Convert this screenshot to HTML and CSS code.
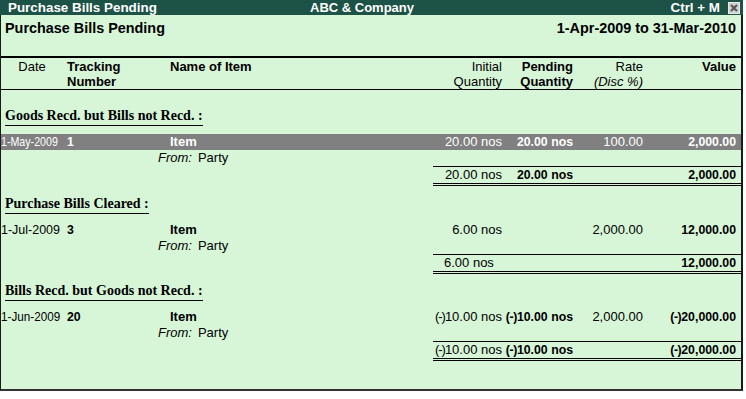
FILE: index.html
```html
<!DOCTYPE html>
<html>
<head>
<meta charset="utf-8">
<title>Purchase Bills Pending</title>
<link rel="stylesheet" href="styles.css">
</head>
<body>
<div class="app">
  <div class="titlebar">
    <span class="tb-left">Purchase Bills Pending</span>
    <span class="tb-center">ABC &amp; Company</span>
    <span class="tb-key">Ctrl + M</span>
    <span class="tb-close"><svg width="12" height="12" viewBox="0 0 12 12"><rect x="0.5" y="0.5" width="11" height="11" fill="#d0d0d0" stroke="#e8e8e8"/><path d="M3 3 L9 9 M9 3 L3 9" stroke="#555" stroke-width="2"/></svg></span>
  </div>
  <div class="body">
    <div class="report-head">
      <span class="rh-title">Purchase Bills Pending</span>
      <span class="rh-period">1-Apr-2009 to 31-Mar-2010</span>
    </div>
    <div class="cols grid">
      <div class="c-date center">Date</div>
      <div class="c-track b">Tracking<br>Number</div>
      <div class="c-name b">Name of Item</div>
      <div class="c-init r">Initial<br>Quantity</div>
      <div class="c-pend r b">Pending<br>Quantity</div>
      <div class="c-rate r">Rate<br><i>(Disc %)</i></div>
      <div class="c-val r b">Value</div>
    </div>

    <section class="sec sec-1">
      <div class="sec-title"><span>Goods Recd. but Bills not Recd. :</span></div>
      <div class="row grid sel">
        <div class="c-date"><span class="fit sx82">1-May-2009</span></div>
        <div class="c-track b">1</div>
        <div class="c-name"><span class="item b">Item</span></div>
        <div class="c-init r">20.00 nos</div>
        <div class="c-pend r b">20.00 nos</div>
        <div class="c-rate r">100.00</div>
        <div class="c-val r b">2,000.00</div>
      </div>
      <div class="row grid">
        <div class="c-date"></div>
        <div class="c-track"></div>
        <div class="c-name"><i>From:</i><span class="party">Party</span></div>
      </div>
      <div class="total">
        <div class="r">20.00 nos</div>
        <div class="r b">20.00 nos</div>
        <div class="r"></div>
        <div class="r b">2,000.00</div>
      </div>
    </section>

    <section class="sec sec-2">
      <div class="sec-title"><span>Purchase Bills Cleared :</span></div>
      <div class="row grid">
        <div class="c-date"><span class="fit sx96">1-Jul-2009</span></div>
        <div class="c-track b">3</div>
        <div class="c-name"><span class="item b">Item</span></div>
        <div class="c-init r">6.00 nos</div>
        <div class="c-pend r b"></div>
        <div class="c-rate r">2,000.00</div>
        <div class="c-val r b">12,000.00</div>
      </div>
      <div class="row grid">
        <div class="c-date"></div>
        <div class="c-track"></div>
        <div class="c-name"><i>From:</i><span class="party">Party</span></div>
      </div>
      <div class="total">
        <div class="l">6.00 nos</div>
        <div class="r b"></div>
        <div class="r"></div>
        <div class="r b">12,000.00</div>
      </div>
    </section>

    <section class="sec sec-3">
      <div class="sec-title"><span>Bills Recd. but Goods not Recd. :</span></div>
      <div class="row grid">
        <div class="c-date"><span class="fit sx90">1-Jun-2009</span></div>
        <div class="c-track b">20</div>
        <div class="c-name"><span class="item b">Item</span></div>
        <div class="c-init r"><span class="neg">(-)</span>10.00 nos</div>
        <div class="c-pend r b"><span class="neg">(-)</span>10.00 nos</div>
        <div class="c-rate r">2,000.00</div>
        <div class="c-val r b"><span class="neg">(-)</span>20,000.00</div>
      </div>
      <div class="row grid">
        <div class="c-date"></div>
        <div class="c-track"></div>
        <div class="c-name"><i>From:</i><span class="party">Party</span></div>
      </div>
      <div class="total">
        <div class="r"><span class="neg">(-)</span>10.00 nos</div>
        <div class="r b"><span class="neg">(-)</span>10.00 nos</div>
        <div class="r"></div>
        <div class="r b"><span class="neg">(-)</span>20,000.00</div>
      </div>
    </section>
  </div>
</div>
</body>
</html>
```

FILE: styles.css
```css
html, body {
  margin: 0;
  padding: 0;
  background: #ffffff;
}

.app {
  width: 743px;
  height: 391px;
  display: flex;
  flex-direction: column;
  font-family: "Liberation Sans", Arial, sans-serif;
  font-size: 13px;
  color: #000;
}

.titlebar {
  height: 15px;
  background: #1d5246;
  color: #ffffff;
  font-weight: bold;
  font-size: 13.4px;
  line-height: 15px;
  display: flex;
  align-items: center;
  white-space: nowrap;
}

.tb-left {
  padding-left: 8px;
  width: 302px;
}

.tb-center {
  font-size: 13px;
}

.tb-key {
  margin-left: auto;
  margin-right: 8px;
}

.tb-close {
  display: flex;
  width: 12px;
  height: 12px;
  margin-right: 3px;
}

.body {
  flex: 1;
  background: #d7f5d7;
  border-left: 1px solid #1a1a1a;
  border-right: 2px solid #1a1a1a;
  border-bottom: 2px solid #333;
  display: flex;
  flex-direction: column;
}

.report-head {
  height: 36px;
  padding: 5px 5px 0 4px;
  border-bottom: 2px solid #000;
  display: flex;
  justify-content: space-between;
  font-weight: bold;
  font-size: 14.4px;
  line-height: 16px;
}

.grid {
  display: grid;
  grid-template-columns: 62px 95px 275px 71px 71px 70px 96px;
}

.cols {
  height: 30px;
  padding-top: 1px;
  line-height: 15px;
  border-bottom: 1px solid #000;
}

.b { font-weight: bold; }
.r { text-align: right; }
.center { text-align: center; }

.c-track { padding-left: 4px; }
.cols .c-name { padding-left: 12px; }
.c-init, .c-pend, .c-rate { padding-right: 2px; }
.c-val { padding-right: 5px; }

.sec-title {
  display: flex;
  padding-left: 4px;
  font-family: "Liberation Serif", "Times New Roman", serif;
  font-weight: bold;
  font-size: 14px;
  line-height: 15px;
}

.sec-title span {
  padding-bottom: 2px;
  border-bottom: 1px solid #000;
}

.sec-1 .sec-title { margin-top: 18px; }
.sec-2 .sec-title { margin-top: 10px; }
.sec-3 .sec-title { margin-top: 9px; }

.row {
  height: 16px;
  line-height: 16px;
  white-space: nowrap;
}

.row .r.b,
.total .r.b,
.row .c-track.b {
  font-size: 12.3px;
}

.sec-title + .row { margin-top: 8px; }

.sel {
  background: #808080;
  color: #ffffff;
}

.fit {
  display: inline-block;
  transform-origin: left center;
}
.sx82 { transform: scaleX(0.82); }
.sx90 { transform: scaleX(0.90); }
.sx96 { transform: scaleX(0.96); }

.neg {
  letter-spacing: -1px;
}

.b .neg {
  letter-spacing: -0.4px;
}

.item { padding-left: 12px; }
.party { padding-left: 6px; }

.total {
  margin-left: 432px;
  display: grid;
  grid-template-columns: 71px 71px 70px 96px;
  height: 16px;
  line-height: 16px;
  border-top: 1px solid #000;
  border-bottom: 3px double #000;
  white-space: nowrap;
}

.total > div:nth-child(1),
.total > div:nth-child(2),
.total > div:nth-child(3) { padding-right: 2px; }
.total > div:nth-child(4) { padding-right: 5px; }
.total .l { padding-left: 11px; }
```
